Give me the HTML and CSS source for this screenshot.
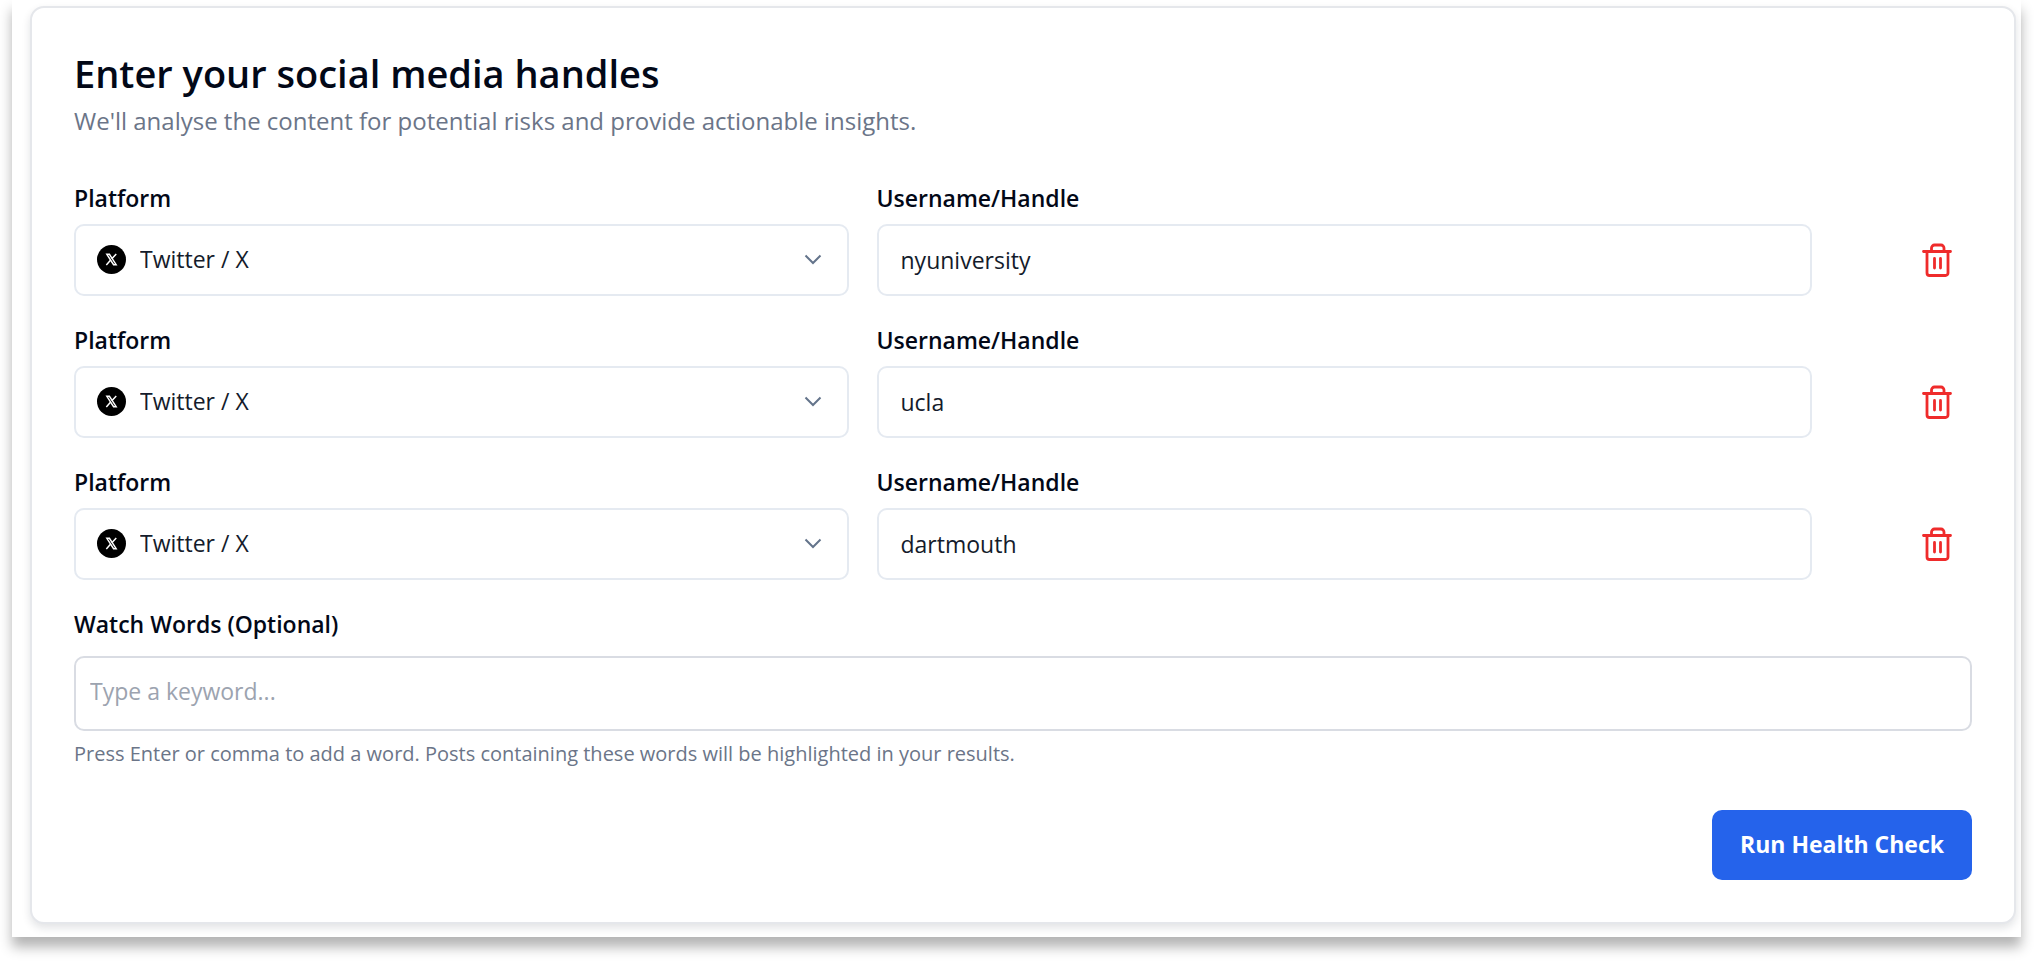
FILE: index.html
```html
<!DOCTYPE html>
<html lang="en">
<head>
    <meta charset="UTF-8">
    <meta name="viewport" content="width=device-width, initial-scale=1.0">
    <title>Social Media Health Check</title>
    <link rel="stylesheet" href="styles.css">
</head>
<body>
    <!-- shared icons -->
    <svg class="sprite" aria-hidden="true">
      <symbol id="icon-x" viewBox="0 0 28 28">
        <circle cx="14" cy="14" r="14" fill="#000"/>
        <path d="M9.500 9h2.500l6.500 10h-2.500z" fill="#000" stroke="#fff" stroke-width="1.400"/>
        <path d="M18.600 8.600l-4.300 4.600M13 14.800l-4 4.500" stroke="#fff" stroke-width="1.400"/>
      </symbol>
      <symbol id="icon-chevron" viewBox="0 0 18 11">
        <path d="M1.500 1.500L9 9l7.500-7.500" fill="none" stroke="currentColor" stroke-width="2"/>
      </symbol>
      <symbol id="icon-trash" viewBox="0 0 30 34">
        <path d="M1.500 8.500h27M5 8.500V30a2.500 2.500 0 0 0 2.500 2.500h16a2.500 2.500 0 0 0 2.500-2.500V8.500M9.500 8.500V5a3 3 0 0 1 3-3h6.500a3 3 0 0 1 3 3v3.500M12.500 15.500v9.500M18.500 15.500v9.500" fill="none" stroke="currentColor" stroke-width="2.800" stroke-linecap="round" stroke-linejoin="round"/>
      </symbol>
    </svg>
    <main class="frame">
      <form class="card">
        <h1 class="title">Enter your social media handles</h1>
        <p class="subtitle">We'll analyse the content for potential risks and provide actionable insights.</p>

        <div class="row">
          <div class="field platform">
            <label for="platform1">Platform</label>
            <div class="select-box">
              <svg class="logo"><use href="#icon-x"/></svg>
              <select id="platform1" class="control"><option>Twitter / X</option></select>
              <svg class="chevron"><use href="#icon-chevron"/></svg>
            </div>
          </div>
          <div class="field handle">
            <label for="handle1">Username/Handle</label>
            <input type="text" id="handle1" class="control" value="nyuniversity">
          </div>
          <button type="button" class="remove" aria-label="Remove"><svg><use href="#icon-trash"/></svg></button>
        </div>

        <div class="row">
          <div class="field platform">
            <label for="platform2">Platform</label>
            <div class="select-box">
              <svg class="logo"><use href="#icon-x"/></svg>
              <select id="platform2" class="control"><option>Twitter / X</option></select>
              <svg class="chevron"><use href="#icon-chevron"/></svg>
            </div>
          </div>
          <div class="field handle">
            <label for="handle2">Username/Handle</label>
            <input type="text" id="handle2" class="control" value="ucla">
          </div>
          <button type="button" class="remove" aria-label="Remove"><svg><use href="#icon-trash"/></svg></button>
        </div>

        <div class="row">
          <div class="field platform">
            <label for="platform3">Platform</label>
            <div class="select-box">
              <svg class="logo"><use href="#icon-x"/></svg>
              <select id="platform3" class="control"><option>Twitter / X</option></select>
              <svg class="chevron"><use href="#icon-chevron"/></svg>
            </div>
          </div>
          <div class="field handle">
            <label for="handle3">Username/Handle</label>
            <input type="text" id="handle3" class="control" value="dartmouth">
          </div>
          <button type="button" class="remove" aria-label="Remove"><svg><use href="#icon-trash"/></svg></button>
        </div>

        <div class="watch">
          <label for="watch">Watch Words (Optional)</label>
          <input type="text" id="watch" class="watch-input" placeholder="Type a keyword...">
          <p class="hint">Press Enter or comma to add a word. Posts containing these words will be highlighted in your results.</p>
        </div>

        <div class="actions">
          <button type="submit" class="run">Run Health Check</button>
        </div>
      </form>
    </main>
</body>
</html>
```
FILE: styles.css
```css
* {
  box-sizing: border-box;
}

body {
  margin: 0;
  background-color: #fff;
  color: #020817;
  font-family: "Segoe UI", "Open Sans", sans-serif;
  font-size: 23px;
}

.sprite {
  display: none;
}

.frame {
  margin: 0 13px 24px 12px;
  padding: 6px 5px 13px 18px;
  background-color: #fff;
  box-shadow: 0 10px 12px rgba(0, 0, 0, 0.3);
}

.card {
  padding: 42px;
  border: 2px solid #e5e7eb;
  border-radius: 14px;
  background-color: #fff;
  box-shadow: 0 4px 8px rgba(15, 23, 42, 0.12);
}

.title {
  margin: 0;
  font-size: 38px;
  font-weight: 600;
  line-height: 46px;
}

.subtitle {
  margin: 7px 0 43px;
  color: #6b7588;
  font-size: 24px;
  line-height: 36px;
}

.row {
  display: grid;
  grid-template-columns: repeat(12, 1fr);
  column-gap: 28px;
  align-items: end;
  margin-bottom: 28px;
}

.platform {
  grid-column: span 5;
}

.handle {
  grid-column: span 6;
}

label {
  display: block;
  margin-bottom: 9px;
  font-weight: 600;
  line-height: 33px;
}

.control {
  display: block;
  width: 100%;
  height: 72px;
  padding: 0 22px;
  border: 2px solid #e5eaf1;
  border-radius: 10px;
  background-color: #fff;
  color: #141b2b;
  font: inherit;
}

/* Platform drop-down with logo and arrow */
.select-box {
  position: relative;
}

.select-box .control {
  padding-bottom: 2px;
  padding-left: 64px;
  appearance: none;
}

.logo {
  position: absolute;
  left: 23px;
  top: 21px;
  width: 29px;
  height: 29px;
}

.chevron {
  position: absolute;
  right: 27px;
  top: 30px;
  width: 18px;
  height: 11px;
  color: #64748b;
  pointer-events: none;
}

.remove {
  justify-self: end;
  display: flex;
  align-items: center;
  justify-content: center;
  width: 70px;
  height: 72px;
  padding: 0;
  border: none;
  background: none;
  color: #ef2b2b;
  cursor: pointer;
}

.remove svg {
  width: 30px;
  height: 34px;
}

.watch label {
  margin-bottom: 15px;
}

.watch-input {
  display: block;
  width: 100%;
  height: 75px;
  padding: 0 14px 6px;
  border: 2px solid #d9dce3;
  border-radius: 10px;
  color: #141b2b;
  font: inherit;
}

.watch-input::placeholder {
  color: #9ca3af;
}

.hint {
  margin: 9px 0 0;
  color: #6b7588;
  font-size: 20px;
  line-height: 28px;
}

.actions {
  display: flex;
  justify-content: flex-end;
  margin-top: 42px;
}

.run {
  height: 70px;
  padding: 0 28px 2px;
  border: none;
  border-radius: 10px;
  background-color: #2563eb;
  color: #fff;
  font: inherit;
  font-weight: 700;
  cursor: pointer;
}
```
